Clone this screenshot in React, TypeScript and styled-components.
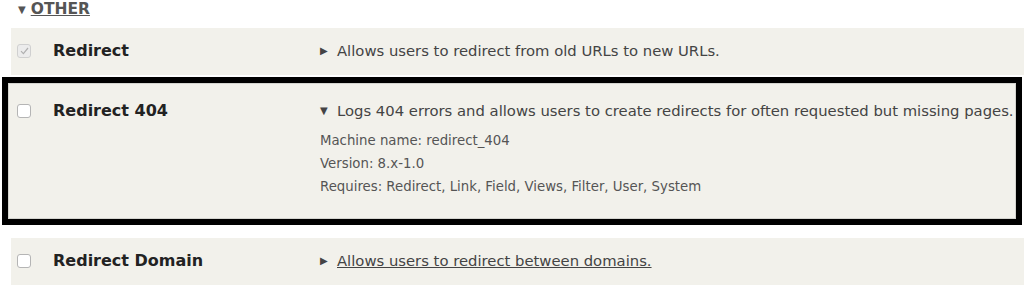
import styled, { createGlobalStyle } from 'styled-components'

const GlobalStyle = createGlobalStyle`
    html, body {
        margin: 0;
        padding: 0;
        background: #fff;
    }
    body {
        font-family: 'DejaVu Sans', 'Liberation Sans', sans-serif;
        color: #222;
        width: 1024px;
        height: 294px;
        overflow: hidden;
    }
`;

const Page = styled.div`
    display: flex;
    flex-direction: column;
    padding: 0 0 0 2px;
`;

const Legend = styled.div`
    display: flex;
    align-items: center;
    gap: 5px;
    height: 18px;
    margin-bottom: 10px;
    padding-left: 16px;
    font-size: 15.5px;
    font-weight: 700;
    color: #555;
    span.arrow {
        font-size: 10px;
    }
    a {
        color: #555;
        text-decoration: underline;
        text-transform: uppercase;
    }
`;

const Row = styled.div<{ $open?: boolean }>`
    display: flex;
    align-items: flex-start;
    background: #f2f1eb;
    margin-left: ${p => (p.$open ? '0' : '9px')};
    padding: ${p => (p.$open ? '16px 0 20px 8px' : '12px 0 13px 6px')};
    border: ${p => (p.$open ? '1px solid #d4d4cf' : 'none')};
`;

const Frame = styled.div`
    width: 1008px;
    border: 6px solid #000;
    margin: 2px 0 13px 0;
`;

const Check = styled.span<{ $checked?: boolean }>`
    display: flex;
    align-items: center;
    justify-content: center;
    flex: 0 0 auto;
    width: 12px;
    height: 12px;
    margin-top: 4px;
    margin-right: 22px;
    border: 1px solid ${p => (p.$checked ? '#d0d0d0' : '#b5b5b5')};
    border-radius: 3px;
    background: ${p => (p.$checked ? '#ececec' : '#fff')};
`;

const Title = styled.div`
    flex: 0 0 267px;
    font-size: 16px;
    font-weight: 700;
    line-height: 22px;
    color: #222;
`;

const Desc = styled.div`
    flex: 1;
    font-size: 14.8px;
    line-height: 22px;
    color: #444;
    white-space: nowrap;
`;

const Summary = styled.div`
    display: flex;
    align-items: center;
    gap: 7px;
    a {
        color: #444;
        text-decoration: underline;
    }
`;

const Arrow = styled.span`
    font-size: 10px;
    width: 10px;
`;

const Details = styled.div`
    display: flex;
    flex-direction: column;
    margin-top: 7px;
    font-size: 13.3px;
    line-height: 23px;
    color: #555;
`;

const CheckMark = () => (
    <svg width="9" height="8" viewBox="0 0 9 8">
        <path d="M1 4.2 L3.4 6.6 L8 1" fill="none" stroke="#b0b0b0" strokeWidth="1.2" />
    </svg>
)

const App = () => {
    return (
        <Page>
            <GlobalStyle />
            <Legend>
                <span className="arrow">▼</span>
                <a>Other</a>
            </Legend>
            <Row>
                <Check $checked><CheckMark /></Check>
                <Title>Redirect</Title>
                <Desc>
                    <Summary><Arrow>▶</Arrow>Allows users to redirect from old URLs to new URLs.</Summary>
                </Desc>
            </Row>
            <Frame>
                <Row $open>
                    <Check />
                    <Title>Redirect 404</Title>
                    <Desc>
                        <Summary><Arrow>▼</Arrow>Logs 404 errors and allows users to create redirects for often requested but missing pages.</Summary>
                        <Details>
                            <span>Machine name: redirect_404</span>
                            <span>Version: 8.x-1.0</span>
                            <span>Requires: Redirect, Link, Field, Views, Filter, User, System</span>
                        </Details>
                    </Desc>
                </Row>
            </Frame>
            <Row>
                <Check />
                <Title>Redirect Domain</Title>
                <Desc>
                    <Summary><Arrow>▶</Arrow><a>Allows users to redirect between domains.</a></Summary>
                </Desc>
            </Row>
        </Page>
    )
}

export default App;
